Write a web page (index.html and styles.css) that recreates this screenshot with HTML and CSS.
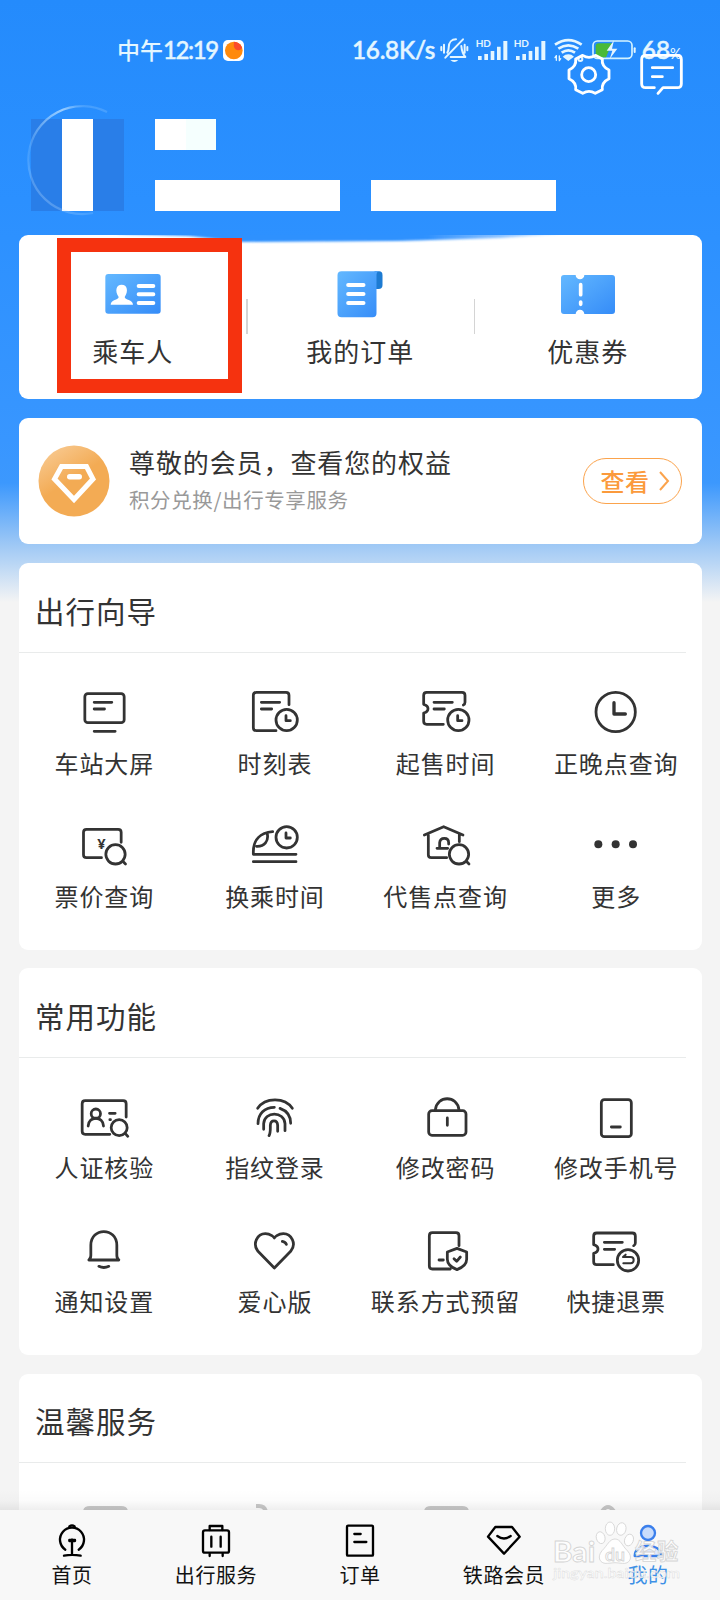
FILE: index.html
```html
<!DOCTYPE html>
<html lang="zh-CN">
<head>
<meta charset="utf-8">
<title>我的</title>
<link rel="stylesheet" href="styles.css">
</head>
<body>
<div class="phone">
  <main class="content">
    <header class="top">
      <div class="status">
        <div class="clock"><span class="clock-cn">中午</span><span class="clock-num">12:19</span>
          <svg class="app-dot" viewBox="0 0 64 64"><rect width="64" height="64" rx="15" fill="#fff"/><circle cx="33" cy="32" r="27" fill="#ff8a0c"/><path d="M34 5a27 27 0 0 1 24 18c-3 10-14 10-20 5s-6-15-4-23z" fill="#fb4a2c"/></svg>
        </div>
        <svg class="status-right" viewBox="0 0 1140 300">
          <g fill="#e4f6ff" class="latin">
            <text x="36" y="116" font-size="73" font-weight="500" textLength="250" stroke="#e4f6ff" stroke-width="1.500">16.8K/s</text>
            <text x="407" y="81" font-size="29" font-weight="700" textLength="46" lengthAdjust="spacingAndGlyphs">HD</text>
            <text x="521" y="81" font-size="29" font-weight="700" textLength="46" lengthAdjust="spacingAndGlyphs">HD</text>
            <text x="905" y="116" font-size="73" font-weight="500" textLength="85" stroke="#e4f6ff" stroke-width="1.500">68</text>
            <text x="990" y="116" font-size="44" font-weight="500" textLength="34" lengthAdjust="spacingAndGlyphs">%</text>
            <path d="M414 108h11v12h-11zM433 102h11v18h-11zM452 93h11v27h-11zM471 80h11v40h-11zM490 63h12v57h-12zM528 108h11v12h-11zM547 102h11v18h-11zM566 93h11v27h-11zM585 80h11v40h-11zM604 63h12v57h-12z"/>
            <path d="M331 120h24q-12 12-24 0zM668 110a24 24 0 0 1 34 0l-17 13z"/>
          </g>
          <g fill="none" stroke="#e4f6ff" stroke-width="6" stroke-linecap="round" stroke-linejoin="round">
            <path d="M316 113l53-55M322 98q4-6 4-15c0-17 10-25 22-25M364 78q2 22 12 33H332M304 81v10M312 74v24M374 74v24M382 81v10"/>
            <path d="M645 74q40-27 80 0M655 86q30-20 60 0M665 98q20-14 40 0" stroke-width="8" stroke-linecap="butt"/>
            <path d="M649 121v-14M658 108v14M645 113l4-6M662 116l-4 6" stroke-width="4"/><circle cx="721" cy="117" r="6"/>
          </g>
          <rect x="759" y="63" width="117" height="52" rx="13" fill="none" stroke="#d3f3ff" stroke-width="5"/>
          <path d="M776 70h40l-18 42h-22q-9 0-9-9v-24q0-9 9-9z" fill="#4aba38"/>
          <path d="M822 61l-22 31h17l-8 25 23-31h-16z" fill="#e5f5ff"/><rect x="881" y="82" width="6" height="17" rx="3" fill="#e4f6ff"/>
          <g fill="none" stroke="#fff" stroke-width="8.500" stroke-linejoin="round" stroke-linecap="round">
            <path transform="translate(747 163)" d="M60-13V13Q37 24 40 46L19 57Q0 45-19 57L-40 46Q-37 24-60 13V-13Q-37-24-40-46L-19-57Q0-45 19-57L40-46Q37-24 60-13Z"/>
            <circle cx="746" cy="164" r="21"/>
            <path d="M943 203h-26q-12 0-12-12v-73q0-12 12-12h95q12 0 12 12v73q0 12-12 12h-43l-15 17M937 143h61M937 170h30"/>
          </g>
        </svg>
      </div>
      <div class="profile">
        <div class="avatar"><span></span>
          <svg class="ring" viewBox="0 0 110 112"><defs><linearGradient id="rg" x1="0" y1="1" x2=".7" y2="0"><stop offset="0" stop-color="#fff" stop-opacity=".3"/><stop offset=".4" stop-color="#8cc8ff" stop-opacity=".25"/><stop offset=".85" stop-color="#bfe2ff" stop-opacity=".75"/><stop offset="1" stop-color="#bfe2ff" stop-opacity=".2"/></linearGradient></defs><path d="M82 8A54 54 0 1 0 68 109" fill="none" stroke="url(#rg)" stroke-width="2.200"/></svg>
        </div>
        <div class="lines">
          <i class="name"></i>
          <div class="pair"><i></i><i></i></div>
        </div>
      </div>
    </header>

    <section class="card shortcuts">
      <svg class="smear" viewBox="0 0 470 10"><defs><filter id="sf" x="-5%" y="-60%" width="110%" height="220%"><feGaussianBlur stdDeviation="3 1"/></filter><linearGradient id="sg"><stop offset=".7" stop-color="#2f91fe"/><stop offset="1" stop-color="#2f91fe" stop-opacity=".2"/></linearGradient></defs><path d="M20-4L20-1 90 1 142 7 300 6 400 3 460-1 460-4z" fill="url(#sg)" filter="url(#sf)"/></svg>
      <div class="shortcut">
        <svg viewBox="309 537 180 150"><defs><linearGradient id="bg" x1="0" y1="0" x2="1" y2="1"><stop offset="0" stop-color="#63b8ff"/><stop offset="1" stop-color="#358cf8"/></linearGradient></defs><rect x="316" y="552" width="166" height="119" rx="9" fill="url(#bg)"/><path d="M332 644c0-15 24-14 24-23-12-18-8-37 9-37s21 19 9 37c0 9 25 8 25 23z" fill="#fff"/><path d="M416 588h44M416 613h44M416 639h44" stroke="#fff" stroke-width="12" stroke-linecap="round"/></svg>
        <b>乘车人</b>
        <span class="marker"></span>
      </div>
      <div class="shortcut">
        <svg viewBox="91.5 132 180 150"><path d="M225 139h14q10 0 10 12v29q0 12-12 12h-12z" fill="#1d7bd2"/><path d="M126 139h112q-7 2-7 12v114q0 12-12 12h-93q-12 0-12-12V151q0-12 12-12z" fill="url(#bg)"/><path d="M146 180h46M146 207h46M146 234h46" stroke="#fff" stroke-width="12" stroke-linecap="round"/></svg>
        <b>我的订单</b>
      </div>
      <div class="shortcut">
        <svg viewBox="774 132 180 150"><path d="M792 150h35a13 13 0 0 0 26 0h83q9 0 9 9v99q0 9-9 9h-83a13 13 0 0 0-26 0h-35q-9 0-9-9v-99q0-9 9-9z" fill="url(#bg)"/><path d="M842 179v30M842 231v7" stroke="#fff" stroke-width="11" stroke-linecap="round"/></svg>
        <b>优惠券</b>
      </div>
    </section>

    <section class="card member">
      <svg class="medal" viewBox="0 0 72 72"><defs><linearGradient id="og" x1="0" y1="0" x2=".5" y2=".8"><stop offset="0" stop-color="#f9cf9c"/><stop offset=".7" stop-color="#f3ab54"/></linearGradient></defs><circle cx="36" cy="36" r="35.500" fill="url(#og)"/><path d="M23.5 21.5h25L55 34 36 54.5 16.500 34z" fill="none" stroke="#fff" stroke-width="5"/><rect x="29" y="29" width="15" height="5.500" rx="2.700" fill="#fff"/></svg>
      <div class="member-text"><h3>尊敬的会员，查看您的权益</h3><p>积分兑换/出行专享服务</p></div>
      <div class="view">查看<svg viewBox="0 0 12 22"><path d="M2 2l8 9-8 9" fill="none" stroke="#fba34c" stroke-width="2"/></svg></div>
    </section>

    <section class="card panel">
      <h2>出行向导</h2>
      <div class="grid">
        <div class="item"><svg viewBox="133.500 48 180 156"><rect x="166" y="71" width="118" height="87" rx="9"/><path d="M194 97h53M194 117h31M194 184h63"/></svg><span>车站大屏</span></div>
        <div class="item"><svg viewBox="645 48 180 156"><path d="M777 104V76q0-9-9-9h-89q-9 0-9 9v97q0 9 9 9h59M694 97h55M694 117h31"/><circle cx="770" cy="150" r="32"/><path d="M768 137v15h13"/></svg><span>时刻表</span></div>
        <div class="item"><svg viewBox="167 48 180 156"><path d="M309 105q5-2 5-8V76q0-9-9-9H199q-9 0-9 9v27q13 4 13 13t-13 13v25q0 9 9 9h50M221 97h55M221 117h31"/><circle cx="294" cy="150" r="32"/><path d="M292 137v15h13"/></svg><span>起售时间</span></div>
        <div class="item"><svg viewBox="679 48 180 156"><circle cx="768" cy="126" r="59"/><path d="M763 98v34h34" stroke-width="10"/></svg><span>正晚点查询</span></div>
        <div class="item"><svg viewBox="133.500 447 180 156"><path d="M275 517v-30q0-9-9-9h-95q-9 0-9 9v67q0 9 9 9h45M280 574l8 8"/><circle cx="258" cy="553" r="29"/><text class="yen" x="216" y="537">¥</text></svg><span>票价查询</span></div>
        <div class="item"><svg viewBox="645 447 180 156"><path d="M728 485c-38 3-58 25-58 60v8h128M670 575h128M712 492c4 20-8 38-32 37"/><circle cx="770" cy="502" r="32"/><path d="M768 489v15h13"/></svg><span>换乘时间</span></div>
        <div class="item"><svg viewBox="167 447 180 156"><path d="M192 495l58-25 58 25M204 495v59q0 9 9 9h46M297 495v20M230 535h32M238 535v-17q1-13 14-13t13 13v4M318 574l8 8"/><circle cx="296" cy="553" r="29"/></svg><span>代售点查询</span></div>
        <div class="item"><svg viewBox="679 447 180 156" class="dots"><circle cx="716" cy="523" r="12"/><circle cx="768" cy="523" r="12"/><circle cx="820" cy="523" r="12"/></svg><span>更多</span></div>
      </div>
    </section>

    <section class="card panel common">
      <h2>常用功能</h2>
      <div class="grid">
        <div class="item"><svg viewBox="133.500 31 180 156"><path d="M290 112V72q0-9-9-9H167q-9 0-9 9v83q0 9 9 9h74M240 101h17M241 120h2M287 161l8 9"/><circle cx="199" cy="102" r="14"/><path d="M176 139c0-31 46-31 46 0"/><circle cx="269" cy="144" r="24"/></svg><span>人证核验</span></div>
        <div class="item"><svg viewBox="645 31 180 156"><path d="M683 86c22-34 82-34 104 0M684 132c0-30 20-49 49-49M750 86c20 7 32 24 32 45M701 149v-17c2-38 62-38 64 0v21M717 168c5-8 4-19 4-31 1-18 21-18 22 0v18"/></svg><span>指纹登录</span></div>
        <div class="item"><svg viewBox="167 31 180 156"><rect x="205" y="93" width="112" height="74" rx="10"/><path d="M225 91c5-45 66-45 71 0M261 115v22"/></svg><span>修改密码</span></div>
        <div class="item"><svg viewBox="679 31 180 156"><rect x="725" y="60" width="90" height="111" rx="9"/><path d="M755 142h27"/></svg><span>修改手机号</span></div>
        <div class="item"><svg viewBox="133.500 434 180 156"><path d="M178 542q6-4 6-14v-30c0-55 78-55 78 0v30q0 10 6 14zM208 561q15 7 30 0"/></svg><span>通知设置</span></div>
        <div class="item"><svg viewBox="645 434 180 156"><path d="M733 566l-49-50c-18-23-2-53 22-53 16 0 27 11 27 13 0-2 11-13 27-13 24 0 41 30 22 53zM757 486q9 1 12 9"/></svg><span>爱心版</span></div>
        <div class="item"><svg viewBox="167 434 180 156"><path d="M296 499v-30q0-9-9-9h-71q-9 0-9 9v91q0 9 9 9h54M236 542h13M290 507l29 11v22q0 20-29 31-29-11-29-31v-22zM281 538l8 8 11-13"/></svg><span>联系方式预留</span></div>
        <div class="item"><svg viewBox="679 434 180 156"><path d="M822 499q5-2 5-8v-21q0-9-9-9H711q-9 0-9 9v26q13 4 13 13t-13 13v25q0 9 9 9h50M734 489h54M734 510h31"/><circle cx="805" cy="543" r="32"/><path d="M798 526l-8 7h23q9 0 9 9t-9 10h-22" stroke-width="6"/></svg><span>快捷退票</span></div>
      </div>
    </section>

    <section class="card panel warm">
      <h2>温馨服务</h2>
      <svg class="peek" viewBox="0 0 682 10"><g fill="none" stroke="#c9c9c9" stroke-width="4"><path d="M66 11q0-4 5-4h31q5 0 5 4M237 5h3q6 0 7 6M407 11q0-4 5-4h31q5 0 5 4M582 12q7-12 14 0"/></g></svg>
    </section>
    <div class="shade"></div>
  </main>

  <nav class="tabs">
    <div class="tab"><svg viewBox="162 95 108 108"><path d="M196 178a36 36 0 1 1 40 0M216 148v44M192 196q24-5 50 0" fill="none"/><path d="M208 108q8-6 16 0M208 149h17v3h-17z"/></svg><span>首页</span></div>
    <div class="tab"><svg viewBox="594 95 108 108"><rect x="609" y="120" width="78" height="67" rx="6" fill="none"/><path d="M629 119v-12h38v12M634 139v30M662 139v30M629 190v7M668 190v7" fill="none"/></svg><span>出行服务</span></div>
    <div class="tab"><svg viewBox="1026 95 108 108"><rect x="1041" y="106" width="78" height="90" rx="3" fill="none"/><path d="M1063 131h19M1063 155h36"/></svg><span>订单</span></div>
    <div class="tab"><svg viewBox="318 95 108 108"><path d="M346 110h50l23 29-47 51-48-51zM352 137q20 15 40 0" fill="none"/></svg><span>铁路会员</span></div>
    <div class="tab on"><svg viewBox="750 95 108 108"><circle cx="804" cy="128" r="21" fill="#c9dcfb"/><path d="M764 197c0-41 80-41 80 0z" fill="#dfeafd"/></svg><span>我的</span></div>
    <svg class="wm" viewBox="510 85 400 200"><g class="latin" fill="#fff" fill-opacity=".82" stroke="#d4d4d4" stroke-width="2.500">
      <ellipse cx="662" cy="144" rx="13" ry="18" transform="rotate(-15 662 144)"/><ellipse cx="690" cy="117" rx="14" ry="20"/><ellipse cx="724" cy="118" rx="14" ry="19" transform="rotate(12 724 118)"/><ellipse cx="747" cy="151" rx="13" ry="18" transform="rotate(20 747 151)"/>
      <path d="M705 148c17 0 21 20 38 36 18 20 5 40-16 37q-22-4-44 0c-22 3-34-17-17-38 16-15 22-35 39-35z"/>
      <text x="518" y="218" font-size="84" font-weight="700" textLength="128" lengthAdjust="spacingAndGlyphs">Bai</text>
      <text x="675" y="213" font-size="54" font-weight="600" textLength="60" lengthAdjust="spacingAndGlyphs">du</text>
      <text x="765" y="209" font-size="64" font-weight="700" class="cn" textLength="130">经验</text>
      <text x="520" y="264" font-size="41" font-weight="600" stroke-width="1" textLength="380" lengthAdjust="spacingAndGlyphs">jingyan.baidu.com</text>
    </g></svg>
  </nav>
</div>
</body>
</html>
```
FILE: styles.css
```css
* { box-sizing: border-box; margin: 0; padding: 0; }
body { font-family: "Noto Sans CJK SC", sans-serif; color: #333; background: #f4f4f4; }
svg { display: block; flex: none; }
.latin { font-family: Lato, "Open Sans", sans-serif; }
.cn { font-family: "Noto Sans CJK SC", sans-serif; }

.phone { width: 720px; height: 1600px; display: flex; flex-direction: column; overflow: hidden; }
.content {
  position: relative; height: 1510px; flex: none; overflow: hidden; padding: 0 18.5px 0 19px;
  background: linear-gradient(#248bfc 0, #2b90ff 200px, #3896ff 440px, #3c98fd 483px, #a0c9f5 546px, #b7d5f5 562px, #f4f4f4 602px);
}

.top { height: 235px; margin: 0 -18.5px 0 -19px; padding-top: 20px; }
.status { display: flex; justify-content: space-between; height: 85px; }
.status-right { width: 380px; height: 100px; }
.clock { display: flex; align-items: center; height: 60px; padding-left: 117px; color: #e4f6ff; line-height: 30px; }
.clock-cn { position: relative; top: -1px; font-size: 23px; font-weight: 500; width: 46px; white-space: nowrap; }
.clock-num { font: 500 24px/30px Lato, sans-serif; width: 54px; letter-spacing: -1.4px; -webkit-text-stroke: .4px #e4f6ff; }
.app-dot { width: 21px; height: 21px; margin-left: 6px; }

.profile { display: flex; padding: 14px 0 0 31px; gap: 31px; }
.avatar { position: relative; width: 93px; height: 92px; background: #297ee8; }
.avatar span { display: block; width: 31px; height: 92px; margin-left: 30.5px; background: #fff; }
.ring { position: absolute; left: -6px; top: -15px; width: 110px; height: 112px; }
.lines { display: flex; flex-direction: column; justify-content: space-between; }
.lines i { display: block; width: 185px; height: 31px; background: #fff; }
.lines .name { width: 61px; background: linear-gradient(90deg, #fff 50%, #f5fffe 50%); }
.pair { display: flex; gap: 30.5px; }

.card { background: #fff; border-radius: 9px; }
.shortcuts { position: relative; display: flex; height: 164px; }
.smear { position: absolute; left: 80px; top: 0; width: 470px; height: 10px; }
.shortcut { position: relative; flex: 1; display: flex; flex-direction: column; align-items: center; padding-top: 34px; }
.shortcut svg:not(.smear) { width: 60px; height: 50px; }
.shortcut b { margin-top: 14px; font-size: 26px; font-weight: 400; line-height: 36px; letter-spacing: 1px; }
.shortcut + .shortcut::before { content: ""; position: absolute; left: -.5px; top: 64px; width: 1.5px; height: 35px; background: #d4d4d4; }
.marker { position: absolute; left: 37.500px; top: 2.5px; width: 185.500px; height: 155.500px; border: 14px solid #f5320f; }

.member { display: flex; align-items: center; height: 126px; margin-top: 19px; padding: 0 20px 0 19px; }
.medal { width: 72px; height: 72px; }
.member-text { flex: 1; padding: 0 0 3px 19px; }
.member h3 { font-size: 26px; font-weight: 400; line-height: 38px; letter-spacing: .9px; }
.member p { font-size: 20.500px; font-weight: 400; line-height: 36px; letter-spacing: .6px; color: #999; }
.view { display: flex; align-items: center; width: 99px; height: 46px; padding: 0 0 1px 17px; border: 1.500px solid #fba34c; border-radius: 23px; color: #fb9a3c; font-size: 24px; font-weight: 500; line-height: 40px; letter-spacing: .6px; }
.view svg { width: 12px; height: 22px; margin-left: 8px; }

.panel { height: 387px; margin-top: 19px; }
.panel h2 { height: 89.500px; margin-right: 16px; padding: 24.500px 0 0 16px; border-bottom: 1.500px solid #e9ebeb; font-size: 29.500px; font-weight: 400; line-height: 44px; letter-spacing: 1px; }
.common { margin-top: 17.500px; }
.common h2 { height: 90.500px; padding-top: 25.500px; }
.grid { display: grid; grid-template-columns: repeat(4, 1fr); row-gap: 39px; padding-top: 33.500px; }
.common .grid { row-gap: 40.300px; padding-top: 32px; }
.item { display: flex; flex-direction: column; align-items: center; gap: 9px; height: 94px; }
.item svg { width: 60px; height: 52px; overflow: visible; fill: none; stroke: #333; stroke-linecap: round; stroke-linejoin: round; stroke-width: 8.300px; }
.item .dots { fill: #333; stroke: none; }
.item .yen { fill: #333; stroke: none; font: 700 44px "Noto Sans", sans-serif; text-anchor: middle; }
.item span { font-size: 24px; font-weight: 400; line-height: 32px; letter-spacing: .9px; white-space: nowrap; }
.peek { width: 682px; height: 10px; margin-top: 38px; }
.shade { position: absolute; left: 0; right: 0; bottom: 0; height: 20px; background: linear-gradient(rgba(0,0,0,0), rgba(0,0,0,.015) 55%, rgba(0,0,0,.065)); }

.tabs { position: relative; display: flex; height: 90px; background: #f8f8f8; }
.tab { flex: 1; display: flex; flex-direction: column; align-items: center; padding-top: 12px; color: #111; }
.tab svg { width: 36px; height: 36px; stroke: #000; stroke-width: 7px; stroke-linecap: round; stroke-linejoin: round; }
.tab span { margin-top: 3px; font-size: 20px; font-weight: 400; line-height: 28px; letter-spacing: .6px; }
.on { color: #3d90e6; }
.on svg { stroke: #3b7fec; }
.wm { position: absolute; left: 550px; top: 8px; width: 133.300px; height: 66.700px; }
```
